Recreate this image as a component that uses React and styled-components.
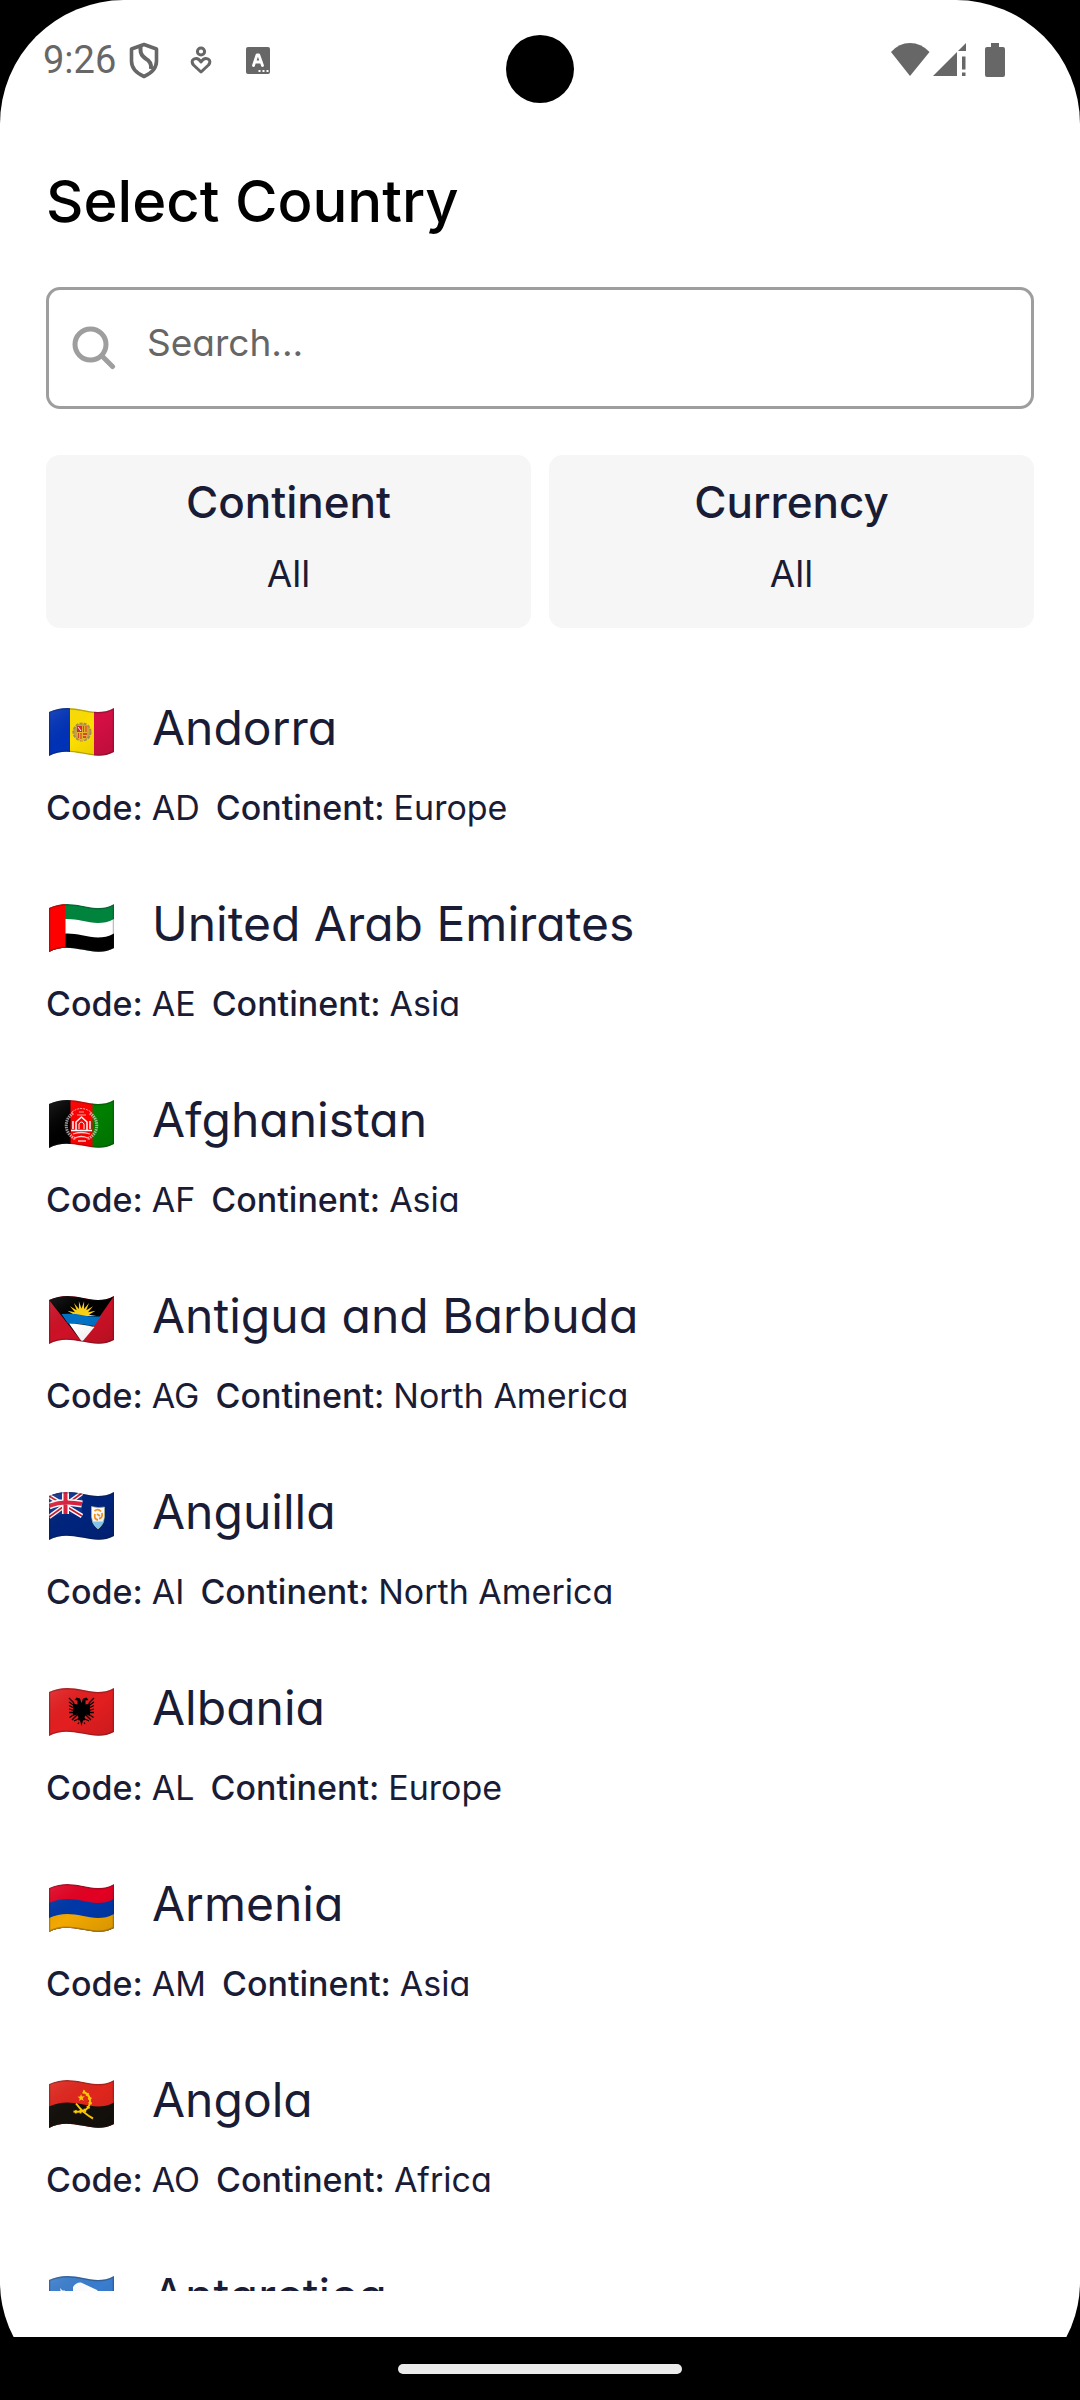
import React, { useId, useState } from "react";
import styled, { createGlobalStyle } from "styled-components";

const color = {
  ink: "#1a1c35",
  status: "#676767",
  outline: "#9e9e9e",
  placeholder: "#666666",
  tile: "#f6f6f6",
};

const GlobalStyle = createGlobalStyle`
  * { box-sizing: border-box; }
  body {
    margin: 0;
    background: #000;
    font-family: Inter, "Open Sans", sans-serif;
    font-feature-settings: "cv11";
    color: ${color.ink};
  }
  h1, ul, dl, dt, dd { margin: 0; padding: 0; }
`;

const Device = styled.div`
  position: relative;
  display: flex;
  flex-direction: column;
  height: 100vh;
  border-radius: 124px 124px 118px 118px;
  overflow: hidden;
  background: linear-gradient(#fff calc(100% - 63px), #000 0);
`;

const StatusBar = styled.header`
  flex: none;
  display: flex;
  align-items: center;
  justify-content: space-between;
  height: 120px;
  padding: 0 65px 0 43px;
  color: ${color.status};
`;

const StatusGroup = styled.div`
  display: flex;
  align-items: center;
  gap: ${(p) => p.$gap}px;
`;

const Time = styled.span`
  margin-right: -10px;
  font-family: Roboto, sans-serif;
  font-size: 38px;
  line-height: 44px;
`;

const StatusIcon = styled.svg`
  display: block;
  width: ${(p) => p.$width}px;
  height: 40px;
  fill: currentColor;
`;

const Camera = styled.div`
  position: absolute;
  top: 35px;
  left: 50%;
  width: 68px;
  height: 68px;
  margin-left: -34px;
  border-radius: 50%;
  background: #000;
`;

const Main = styled.main`
  flex: 1;
  min-height: 0;
  display: flex;
  flex-direction: column;
  padding: 41px 46px 46px;
`;

const Title = styled.h1`
  color: #000;
  font-size: 58px;
  font-weight: 500;
  line-height: 80px;
`;

const SearchBox = styled.label`
  flex: none;
  display: flex;
  align-items: center;
  gap: 31px;
  height: 122px;
  margin-top: 46px;
  padding: 0 23px;
  border: 3px solid ${color.outline};
  border-radius: 14px;
`;

const SearchIcon = styled.svg`
  flex: none;
  width: 44px;
  height: 44px;
  fill: none;
  stroke: ${color.outline};
  stroke-width: 5;
  stroke-linecap: round;
`;

const SearchInput = styled.input`
  flex: 1;
  min-width: 0;
  height: 100%;
  padding: 0 0 12px;
  border: 0;
  outline: 0;
  background: transparent;
  color: ${color.ink};
  font: inherit;
  font-feature-settings: inherit;
  font-size: 37px;
  &::placeholder { color: ${color.placeholder}; opacity: 1; }
`;

const Filters = styled.div`
  flex: none;
  display: grid;
  grid-template-columns: 1fr 1fr;
  gap: 18px;
  margin-top: 46px;
`;

const FilterButton = styled.button`
  display: flex;
  flex-direction: column;
  align-items: center;
  gap: 19px;
  padding: 19px 18px 29px;
  border: 0;
  border-radius: 14px;
  background: ${color.tile};
  color: inherit;
  font: inherit;
  font-feature-settings: inherit;
`;

const FilterName = styled.span`
  font-size: 44px;
  font-weight: 500;
  line-height: 56px;
`;

const FilterValue = styled.span`
  font-size: 37px;
  line-height: 50px;
`;

const CountryList = styled.ul`
  flex: 1;
  min-height: 0;
  display: flex;
  flex-direction: column;
  gap: 55px;
  margin-top: 64px;
  list-style: none;
  overflow-y: auto;
  scrollbar-width: none;
`;

const CountryRow = styled.li`
  flex: none;
  display: flex;
  flex-direction: column;
  gap: 19px;
`;

const CountryHead = styled.div`
  display: flex;
  align-items: center;
  gap: 38px;
`;

const CountryName = styled.span`
  font-size: 48px;
  line-height: 72px;
`;

const Facts = styled.dl`
  display: flex;
  gap: 16px;
  font-size: 34px;
  line-height: 50px;
`;

const Fact = styled.div`
  display: flex;
  gap: 9px;
`;

const FactName = styled.dt`
  font-weight: 500;
`;

const FlagSvg = styled.svg`
  flex: none;
  display: block;
  width: 68px;
  height: 56px;
`;

const NavBar = styled.footer`
  flex: none;
  display: flex;
  align-items: center;
  justify-content: center;
  height: 63px;
`;

const HomePill = styled.div`
  width: 284px;
  height: 10px;
  border-radius: 5px;
  background: #ebebeb;
`;

/* Outline of a waving 65 x 48 flag, and the same top edge used for stripes. */
const FLAG_SHAPE =
  "M0 4C11 -1.2 22 -.6 33 1.8S54 6 65 0V44C54 50 44 47.6 33 45.6S11 42 0 48Z";
const STRIPE = "M0 4C11 -1.2 22 -.6 33 1.8S54 6 65 0V60H0Z";

const Stripe = ({ y, fill }) => (
  <path d={STRIPE} transform={`translate(0 ${y})`} fill={fill} />
);

const rays = (cx, cy, inner, outer, count) => {
  const pts = [];
  for (let i = 0; i <= count * 2; i += 1) {
    const a = Math.PI + (Math.PI * i) / (count * 2);
    const r = i % 2 ? inner : outer;
    pts.push(`${cx + r * Math.cos(a)},${cy + r * Math.sin(a)}`);
  }
  return pts.join(" ");
};

const flagArt = {
  AD: (
    <>
      <rect width="21" height="50" fill="#0032b8" />
      <rect x="21" width="24" height="50" fill="#fedf00" />
      <rect x="45" width="20" height="50" fill="#d50f43" />
      <circle cx="33" cy="24" r="8.6" fill="#c9a63d" stroke="#a98f52" strokeWidth="2" strokeDasharray="3 1.2" />
      <path d="M28 18h10v10q-1 4-5 5-4-1-5-5z" fill="#e8b52c" />
      <path d="M28 18h5v6h-5z" fill="#d52b3a" />
      <path d="M29 19l3 4" stroke="#fff" strokeWidth="1" />
      <path d="M34.5 18v6M37 18v6M29.5 25v5M32 25v6" stroke="#d5432b" strokeWidth="1.2" />
      <path d="M34 26h4M34 29h3" stroke="#c62a2a" strokeWidth="1.4" />
    </>
  ),
  AE: (
    <>
      <Stripe y={0} fill="#00843d" />
      <Stripe y={15} fill="#fff" />
      <Stripe y={29.5} fill="#000" />
      <rect width="16.5" height="50" fill="#f00" />
    </>
  ),
  AF: (
    <>
      <rect width="22" height="50" fill="#000" />
      <rect x="21.5" width="22.5" height="50" fill="#f00" />
      <rect x="43.5" width="22" height="50" fill="#008000" />
      <g fill="none" stroke="#fff">
        <path d="M24 13Q15 20 18 30Q20 36 27 39" strokeWidth="3" strokeDasharray="1.5 .8" opacity=".6" />
        <path d="M41 13Q50 20 47 30Q45 36 38 39" strokeWidth="3" strokeDasharray="1.5 .8" opacity=".6" />
        <path d="M23 12Q32 5 42 12" strokeWidth="1" strokeDasharray="2 1" opacity=".7" />
        <path d="M28 15h9M30 12h5" strokeWidth=".8" opacity=".8" />
        <path d="M24 29V21M41 29V21M27 30V22L32.5 17L38 22V30M22 30.5H43" strokeWidth="1.5" />
        <path d="M30 29V24Q32.5 20 35 24V29" strokeWidth="1" />
        <path d="M24 34Q32 31 41 34M26 38Q32 35 39 38M29 41h8" strokeWidth="1.3" opacity=".8" />
      </g>
    </>
  ),
  AG: (
    <>
      <rect width="65" height="50" fill="#ce1126" />
      <path d="M0 4C11 -1.2 22 -.6 33 1.8S54 6 65 0L33 46Z" fill="#000" />
      <polygon points={rays(32.5, 20, 7.5, 15, 9)} fill="#fcd116" />
      <path d="M12.5 18Q25 17 32.5 19T52 20.5L45 30Q30 27 19 27.5Z" fill="#0072c6" />
      <path d="M20 27.5Q31 27.5 45.5 31L33 46Z" fill="#fff" />
    </>
  ),
  AI: (
    <>
      <rect width="65" height="50" fill="#00247d" />
      <path d="M0 4C11 -1.2 22 -.6 33 1.8V24Q15 19 0 26Z" fill="#0b3190" />
      <path d="M0 4L33 24M33 1L0 25" stroke="#fff" strokeWidth="4.5" />
      <path d="M0 4L33 24M33 1L0 25" stroke="#cf142b" strokeWidth="1.6" />
      <path d="M16.5 0V22M0 14Q14 8 33 12" stroke="#fff" strokeWidth="7" fill="none" />
      <path d="M16.5 0V22M0 14Q14 8 33 12" stroke="#dc1f3c" strokeWidth="4" fill="none" />
      <path d="M42.5 14.5Q49 16.5 55.5 15V25Q54.5 33 49 37Q43.5 33 42.5 25Z" fill="#fff" stroke="#b9c178" strokeWidth=".6" />
      <path d="M43 29.5H55Q53 34 49 36.5Q45 34 43 29.5Z" fill="#8ccbf5" />
      <path d="M45.5 19Q49 16 52 19.5M46 22Q44.5 27 49 28M53 21Q54 26 50 26.5M48 22L51 24" fill="none" stroke="#f7941d" strokeWidth="1.8" />
    </>
  ),
  AL: (
    <>
      <rect width="65" height="50" fill="#e41e20" />
      <path
        d="M32.5 15L31 10.5L27.500 9.500L25.500 12L28.500 12.500L28.500 16.500L26 16L24 14V28L27.500 26.500L29.500 29L28.500 32L31 32.500L32.500 38L34 32.500L36.500 32L35.500 29L37.500 26.500L41 28V14L39 16L36.500 16.500L36.500 12.500L39.500 12L37.500 9.500L34 10.500Z"
        fill="#000"
      />
      <g fill="none" stroke="#000" strokeWidth="1.3">
        <path d="M25 15L20 10M25 17.500L20 14M25 20L20 17.500M25 22.500L20 21M25 24.500L20 24.500M25 26.500L20.500 29.500M28 27L23 32M29 31L25 33M30 34.500L29 36" />
        <path d="M40 15L45 10M40 17.500L45 14M40 20L45 17.500M40 22.500L45 21M40 24.500L45 24.500M40 26.500L44.500 29.500M37 27L42 32M36 31L40 33M35 34.500L36 36" />
      </g>
    </>
  ),
  AM: (
    <>
      <Stripe y={0} fill="#e30022" />
      <Stripe y={15} fill="#0038a8" />
      <Stripe y={30} fill="#f2a800" />
    </>
  ),
  AO: (
    <>
      <Stripe y={0} fill="#e0261d" />
      <Stripe y={22.5} fill="#14100c" />
      <g fill="none" stroke="#ffcb00">
        <path d="M34 11.5Q42 15 41 23.5Q38 33.5 24.5 31.5" strokeWidth="2" />
        <path d="M34 11.5Q42 15 41 23.5Q38 33.5 24.5 31.5" strokeWidth="3.6" strokeDasharray="1.6 3" />
        <path d="M27 23.5Q34 33 44 38.5" strokeWidth="2" />
      </g>
      <path d="M32 14l1 2.500 2.700-.2-2 1.900 1 2.600-2.400-1.400-2.200 1.700.6-2.700-2.200-1.600 2.700-.2z" fill="#ffcb00" />
    </>
  ),
  AQ: (
    <>
      <rect width="65" height="50" fill="#3a7dce" />
      <path d="M11 12L13.5 14.5H16L17 20L24 18L24 11Q27 6 32 6.5L48 14L54 22L52 34L40 41L24 37L14 26Z" fill="#fff" />
    </>
  ),
};

function Flag({ code, name }) {
  const id = useId();
  return (
    <FlagSvg viewBox="-3 -8 68 56" role="img" aria-label={`Flag of ${name}`}>
      <defs>
        <clipPath id={`${id}c`}>
          <path d={FLAG_SHAPE} />
        </clipPath>
        <linearGradient id={`${id}g`} x1="0" y1="0" x2="1" y2="1">
          <stop offset="0" stopColor="#fff" stopOpacity=".12" />
          <stop offset=".5" stopColor="#000" stopOpacity="0" />
          <stop offset="1" stopColor="#000" stopOpacity=".12" />
        </linearGradient>
      </defs>
      <g clipPath={`url(#${id}c)`}>
        {flagArt[code]}
        {code !== "AE" && <path d={FLAG_SHAPE} fill={`url(#${id}g)`} />}
        <path d={FLAG_SHAPE} fill="none" stroke="#1a1a1a" strokeOpacity=".28" strokeWidth="2.6" />
      </g>
    </FlagSvg>
  );
}

const countries = [
  { code: "AD", name: "Andorra", continent: "Europe" },
  { code: "AE", name: "United Arab Emirates", continent: "Asia" },
  { code: "AF", name: "Afghanistan", continent: "Asia" },
  { code: "AG", name: "Antigua and Barbuda", continent: "North America" },
  { code: "AI", name: "Anguilla", continent: "North America" },
  { code: "AL", name: "Albania", continent: "Europe" },
  { code: "AM", name: "Armenia", continent: "Asia" },
  { code: "AO", name: "Angola", continent: "Africa" },
  { code: "AQ", name: "Antarctica", continent: "Antarctica" },
];

function Country({ code, name, continent }) {
  return (
    <CountryRow>
      <CountryHead>
        <Flag code={code} name={name} />
        <CountryName>{name}</CountryName>
      </CountryHead>
      <Facts>
        <Fact>
          <FactName>Code:</FactName>
          <dd>{code}</dd>
        </Fact>
        <Fact>
          <FactName>Continent:</FactName>
          <dd>{continent}</dd>
        </Fact>
      </Facts>
    </CountryRow>
  );
}

function Status() {
  return (
    <StatusBar>
      <StatusGroup $gap={19}>
        <Time>9:26</Time>
        <StatusIcon $width={38} viewBox="0 0 38 40" aria-hidden="true">
          <path
            d="M19 4.5L31.5 9V21Q31.5 31 19 36.5Q6.5 31 6.5 21V9Z"
            fill="none"
            stroke="currentColor"
            strokeWidth="3.6"
            strokeLinejoin="round"
          />
          <path
            d="M15.5 6V10Q15.5 15 20.5 18.5Q27 22 26 29"
            fill="none"
            stroke="currentColor"
            strokeWidth="4"
          />
        </StatusIcon>
        <StatusIcon $width={38} viewBox="0 0 38 40" aria-hidden="true">
          <g fill="none" stroke="currentColor" strokeWidth="3">
            <circle cx="19" cy="11.5" r="3.6" />
            <path d="M19 32L11.5 25Q8.5 21 12 19Q16 17 19 22Q22 17 26 19Q29.5 21 26.5 25Z" strokeLinejoin="round" />
          </g>
        </StatusIcon>
        <StatusIcon $width={38} viewBox="0 0 38 40" aria-hidden="true">
          <rect x="7" y="7" width="24" height="27" rx="2" />
          <path
            d="M14.5 25.5L18 15H19.8L23.5 25.5M15.8 22H22.2"
            fill="none"
            stroke="#fff"
            strokeWidth="2.8"
            strokeLinecap="round"
            strokeLinejoin="round"
          />
          <path d="M19.5 30h2v2h-2zM23.5 30h2v2h-2zM27.5 30h2v2h-2z" fill="#fff" />
        </StatusIcon>
      </StatusGroup>
      <StatusGroup $gap={0}>
        <StatusIcon $width={42} viewBox="0 0 42 40" aria-hidden="true">
          <path d="M2 12Q10 3 21 3T40.5 12L21 36Z" />
        </StatusIcon>
        <StatusIcon $width={42} viewBox="0 0 42 40" aria-hidden="true">
          <path d="M2 36L26 12V36ZM27 11L35 3V11ZM31 16.5H34.5V29.5H31ZM31 32.5H34.5V36H31Z" />
        </StatusIcon>
        <StatusIcon $width={42} viewBox="0 0 42 40" aria-hidden="true">
          <path d="M18 3H26V7H30Q32 7 32 9V35Q32 37 30 37H14Q12 37 12 35V9Q12 7 14 7H18Z" />
        </StatusIcon>
      </StatusGroup>
    </StatusBar>
  );
}

export default function App() {
  const [query, setQuery] = useState("");
  const shown = countries.filter((c) =>
    c.name.toLowerCase().includes(query.toLowerCase())
  );
  return (
    <>
      <GlobalStyle />
      <Device>
        <Status />
        <Camera />
        <Main>
          <Title>Select Country</Title>
          <SearchBox>
            <SearchIcon viewBox="0 0 44 44" aria-hidden="true">
              <circle cx="18.5" cy="18.5" r="15.5" />
              <path d="M30 30L40.5 40.5" />
            </SearchIcon>
            <SearchInput
              type="text"
              aria-label="Search countries"
              placeholder="Search..."
              value={query}
              onChange={(e) => setQuery(e.target.value)}
            />
          </SearchBox>
          <Filters>
            <FilterButton type="button">
              <FilterName>Continent</FilterName>
              <FilterValue>All</FilterValue>
            </FilterButton>
            <FilterButton type="button">
              <FilterName>Currency</FilterName>
              <FilterValue>All</FilterValue>
            </FilterButton>
          </Filters>
          <CountryList>
            {shown.map((c) => (
              <Country key={c.code} {...c} />
            ))}
          </CountryList>
        </Main>
        <NavBar>
          <HomePill />
        </NavBar>
      </Device>
    </>
  );
}
